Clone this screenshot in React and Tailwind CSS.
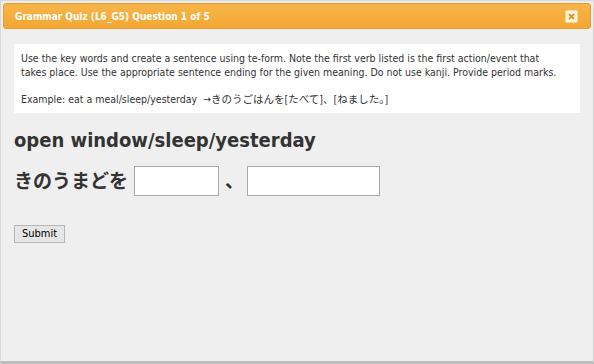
import React from 'react'

const font = { fontFamily: '"DejaVu Sans Condensed", "Noto Sans CJK JP", sans-serif' }

function Header() {
  return (
    <div className="flex items-center justify-between h-[26px] mx-[2px] mt-[2px] pl-[11px] pr-3 rounded-[3px] border border-[#e99a2a] bg-gradient-to-b from-[#f7b548] to-[#f3a733]">
      <span className="text-[10px] font-bold text-white">Grammar Quiz (L6_G5) Question 1 of 5</span>
      <button className="flex items-center justify-center w-[13px] h-[13px] bg-[#fdf6d8] border border-[#f0d79a] rounded-[2px]">
        <svg width="7" height="7" viewBox="0 0 7 7">
          <path d="M1 1 L6 6 M6 1 L1 6" stroke="#e8912a" strokeWidth="1.8" />
        </svg>
      </button>
    </div>
  )
}

function App() {
  return (
    <div style={font} className="w-[594px] h-[364px] bg-[#efefef] border border-[#d8d8d8] border-b-[3px] border-b-[#bdbdbd] text-[#222] overflow-hidden">
      <Header />
      <div className="px-[13px] pt-[15px]">
        <div className="bg-white px-[7px] py-[7px] text-[10.5px] leading-[14px] text-[#333]">
          <p>Use the key words and create a sentence using te-form. Note the first verb listed is the first action/event that<br />takes place. Use the appropriate sentence ending for the given meaning. Do not use kanji. Provide period marks.</p>
          <p className="mt-[13px]">Example: eat a meal/sleep/yesterday &nbsp;→きのうごはんを[たべて]、[ねました。]</p>
        </div>
        <h2 className="mt-[13px] text-[20px] font-bold leading-[28px] text-[#333]">open window/sleep/yesterday</h2>
        <div className="mt-[12px] flex items-center gap-[6px] text-[19px] font-bold text-[#333]">
          <span>きのうまどを</span>
          <input className="w-[85px] h-[30px] bg-white border border-[#aaa]" />
          <span className="w-[16px] text-center">、</span>
          <input className="w-[133px] h-[30px] bg-white border border-[#aaa]" />
        </div>
        <button className="mt-[29px] px-[7px] h-[18px] text-[11px] bg-[#e6e6e6] border border-[#b5b5b5] text-black">Submit</button>
      </div>
    </div>
  )
}

export default App
